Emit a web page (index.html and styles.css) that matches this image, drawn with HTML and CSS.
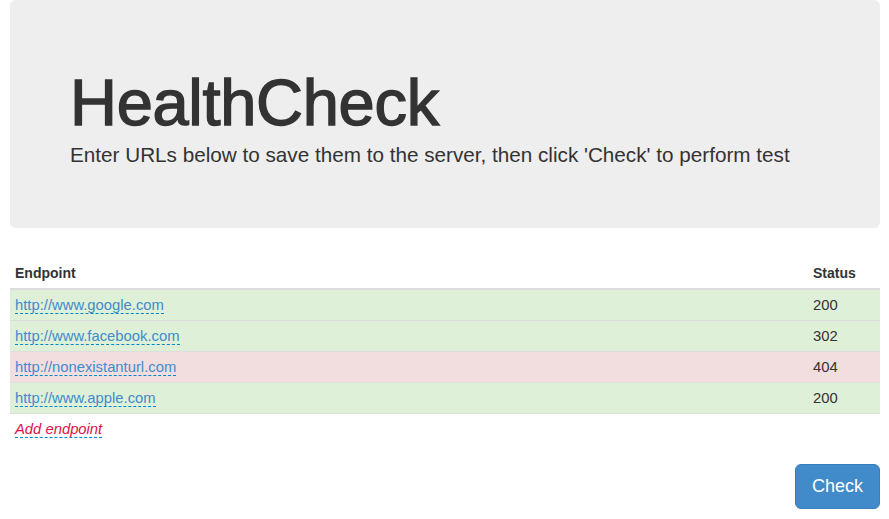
FILE: index.html
```html
<!DOCTYPE html>
<html>
<head>
<meta charset="utf-8">
<title>HealthCheck</title>
<link rel="stylesheet" href="styles.css">
</head>
<body>
<div class="container">
  <div class="jumbotron">
    <h1 class="title">HealthCheck</h1>
    <p class="lead">Enter URLs below to save them to the server, then click 'Check' to perform test</p>
  </div>
  <table class="table">
    <thead>
      <tr><th>Endpoint</th><th class="col-status">Status</th></tr>
    </thead>
    <tbody>
      <tr class="success"><td><a class="editable" href="#">http://www.google.com</a></td><td>200</td></tr>
      <tr class="success"><td><a class="editable" href="#">http://www.facebook.com</a></td><td>302</td></tr>
      <tr class="danger"><td><a class="editable" href="#">http://nonexistanturl.com</a></td><td>404</td></tr>
      <tr class="success"><td><a class="editable" href="#">http://www.apple.com</a></td><td>200</td></tr>
      <tr><td><a class="editable editable-empty" href="#">Add endpoint</a></td><td></td></tr>
    </tbody>
  </table>
  <div class="actions">
    <button class="btn">Check</button>
  </div>
</div>
</body>
</html>
```
FILE: styles.css
```css
* { box-sizing: border-box; }
html, body {
  margin: 0;
  padding: 0;
  background: #fff;
}
body {
  font-family: "Liberation Sans", Arial, Helvetica, sans-serif;
  font-size: 14.8px;
  line-height: 20px;
  color: #333;
}
.container {
  padding: 0 9px 0 10px;
}
.jumbotron {
  background: #eeeeee;
  border-radius: 6px;
  padding: 68px 60px 58px 60px;
  margin-bottom: 30px;
}
.title {
  margin: 0;
  font-size: 65px;
  line-height: 70px;
  font-weight: 400;
  color: #333;
  letter-spacing: -0.3px;
  -webkit-text-stroke: 1.4px #333;
}
.lead {
  margin: 2px 0 0 0;
  font-size: 20.7px;
  line-height: 30px;
  font-weight: 400;
  color: #333;
}
.table {
  width: 100%;
  border-collapse: collapse;
  border-spacing: 0;
  margin-bottom: 20px;
}
.table th {
  text-align: left;
  font-size: 14px;
  font-weight: bold;
  padding: 5px;
  line-height: 20px;
  vertical-align: bottom;
  border-bottom: 2px solid #dddddd;
}
.table .col-status {
  width: 72px;
}
.table td {
  padding: 5px;
  line-height: 20px;
  border-top: 1px solid #dddddd;
  vertical-align: top;
}
.table tr.success td { background: #dff0d8; }
.table tr.danger td { background: #f2dede; }
a.editable {
  color: #428bca;
  text-decoration: none;
  border-bottom: 1px dashed #0088cc;
}
a.editable-empty {
  color: #dd1144;
  font-style: italic;
}
.actions {
  display: flex;
  justify-content: flex-end;
}
.btn {
  font-family: "Liberation Sans", Arial, Helvetica, sans-serif;
  font-size: 18px;
  line-height: 23px;
  padding: 10px 16px;
  color: #fff;
  background: #428bca;
  border: 1px solid #357ebd;
  border-radius: 6px;
  cursor: pointer;
}
```
